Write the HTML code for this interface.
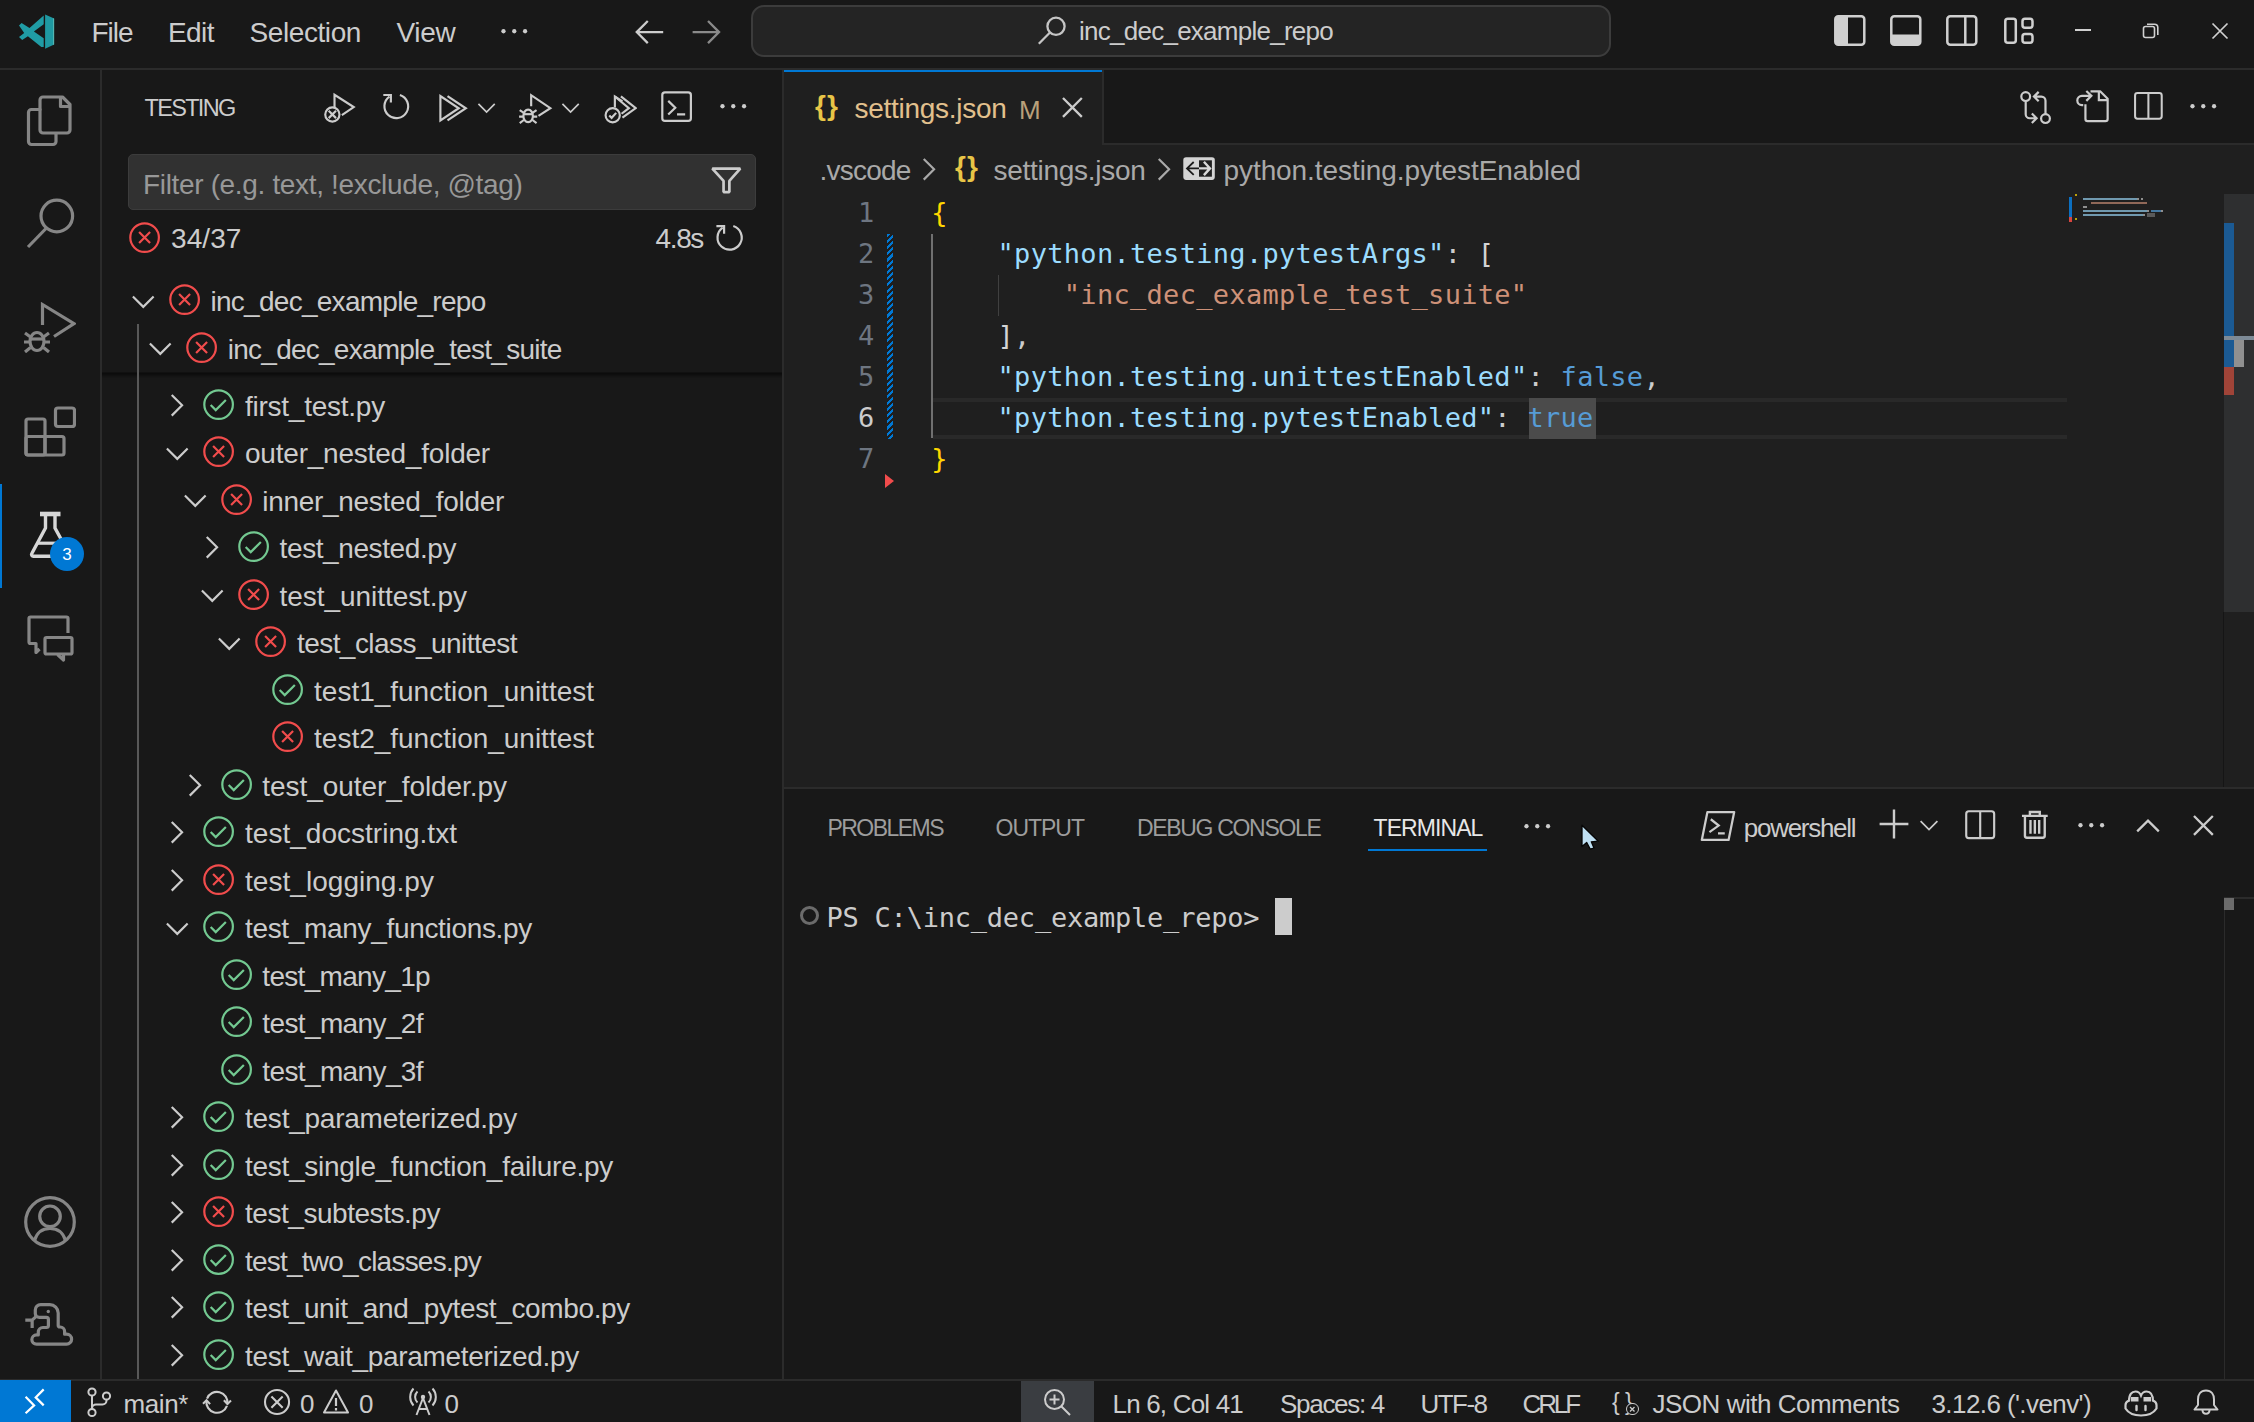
<!DOCTYPE html>
<html lang="en"><head><meta charset="utf-8"><title>settings.json - inc_dec_example_repo - Visual Studio Code</title>
<style>
html,body{margin:0;padding:0;background:#181818;}
body{width:2254px;height:1422px;position:relative;overflow:hidden;font-family:'Liberation Sans',sans-serif;color:#cccccc;}
#app{position:absolute;left:0;top:0;width:2254px;height:1422px;overflow:hidden;background:#181818;}
#app div,#app span,#app svg{position:absolute;display:block;}
#app span{white-space:pre;line-height:1;}
#app span b{font-weight:400;}
</style></head><body><div id="app">
<div style="left:0px;top:0px;width:2254px;height:68px;background:#181818;"></div>
<div style="left:0px;top:68px;width:2254px;height:2px;background:#2b2b2b;"></div>
<svg style="left:18px;top:14px;" width="38" height="36" viewBox="0 0 38 36" fill="none"><path d="M25.7 1.600 11.500 13.900 3.600 9 1 11.400 6.200 19.100 1 23.100 4.200 25.900 9.900 22.300 23.300 33.100H25.700V24.300L15.900 17.500 25.700 10.200z" fill="#209ca5"/><path d="M27.100 0.400 36.100 4.600V30.500L27.100 34.700z" fill="#1f99a2"/><path d="M35.300 4.300 36.100 4.600V30.500L35.300 30.900z" fill="#6cc0b8"/></svg>
<span style="left:91.5px;top:18.70px;font-size:28px;color:#cccccc;letter-spacing:-1.031px;">File</span>
<span style="left:168px;top:18.70px;font-size:28px;color:#cccccc;letter-spacing:-0.562px;">Edit</span>
<span style="left:249.5px;top:18.70px;font-size:28px;color:#cccccc;letter-spacing:-0.410px;">Selection</span>
<span style="left:396.5px;top:18.70px;font-size:28px;color:#cccccc;letter-spacing:-0.297px;">View</span>
<svg style="left:496.73px;top:13.93px;" width="34.54" height="34.54" viewBox="0 0 16 16" fill="none"><circle cx="3" cy="8" r="1" fill="#cccccc"/><circle cx="8" cy="8" r="1" fill="#cccccc"/><circle cx="13" cy="8" r="1" fill="#cccccc"/></svg>
<svg style="left:631.1px;top:13.1px;" width="36.8" height="36.8" viewBox="0 0 16 16" fill="none"><path d="M14 8.3H2.8M7.3 3.5 2.5 8.3 7.3 13.1" stroke="#cccccc" stroke-width="1" stroke-linecap="butt" stroke-linejoin="miter" fill="none"/></svg>
<svg style="left:688.1px;top:13.1px;" width="36.8" height="36.8" viewBox="0 0 16 16" fill="none"><path d="M2 8.3H13.2M8.7 3.5 13.5 8.3 8.7 13.1" stroke="#8a8a8a" stroke-width="1" stroke-linecap="butt" stroke-linejoin="miter" fill="none"/></svg>
<div style="left:751px;top:5px;width:860px;height:52px;background:#242424;border:2px solid #3c3c3c;box-sizing:border-box;border-radius:13px;"></div>
<svg style="left:1036px;top:15px;" width="32" height="32" viewBox="0 0 32 32" fill="none"><circle cx="20" cy="11.300" r="8.600" stroke="#c5c5c5" stroke-width="2.3" stroke-linecap="butt" stroke-linejoin="miter" fill="none"/><path d="M14 17.500 2.800 28.700" stroke="#c5c5c5" stroke-width="2.3" stroke-linecap="butt" stroke-linejoin="miter" fill="none"/></svg>
<span style="left:1079px;top:18.49px;font-size:26px;color:#cccccc;letter-spacing:-0.743px;">inc_dec_example_repo</span>
<svg style="left:1834px;top:14px;" width="32" height="33" viewBox="0 0 32 33" fill="none"><rect x="1.300" y="2.300" width="29" height="28.500" rx="3" stroke="#d0d0d0" stroke-width="2.5" stroke-linecap="butt" stroke-linejoin="miter" fill="none"/><path d="M4 2.300h10v28.500H4a2.700 2.700 0 0 1-2.700-2.700V5A2.700 2.700 0 0 1 4 2.300z" fill="#d0d0d0"/></svg>
<svg style="left:1890px;top:14px;" width="32" height="33" viewBox="0 0 32 33" fill="none"><rect x="1.300" y="2.300" width="29" height="28.500" rx="3" stroke="#d0d0d0" stroke-width="2.5" stroke-linecap="butt" stroke-linejoin="miter" fill="none"/><path d="M1.300 20.500h29V28a2.800 2.800 0 0 1-2.800 2.800H4A2.700 2.700 0 0 1 1.300 28z" fill="#d0d0d0"/></svg>
<svg style="left:1946px;top:14px;" width="32" height="33" viewBox="0 0 32 33" fill="none"><rect x="1.300" y="2.300" width="29" height="28.500" rx="3" stroke="#d0d0d0" stroke-width="2.5" stroke-linecap="butt" stroke-linejoin="miter" fill="none"/><path d="M19.300 3v27" stroke="#d0d0d0" stroke-width="2.5" stroke-linecap="butt" stroke-linejoin="miter" fill="none"/></svg>
<svg style="left:2003px;top:14px;" width="32" height="33" viewBox="0 0 32 33" fill="none"><rect x="2.300" y="4.800" width="10.500" height="24" rx="2.500" stroke="#d0d0d0" stroke-width="2.5" stroke-linecap="butt" stroke-linejoin="miter" fill="none"/><rect x="19.500" y="4.800" width="10" height="9" rx="2.500" stroke="#d0d0d0" stroke-width="2.5" stroke-linecap="butt" stroke-linejoin="miter" fill="none"/><rect x="19.500" y="20" width="10" height="8.800" rx="2.500" stroke="#d0d0d0" stroke-width="2.5" stroke-linecap="butt" stroke-linejoin="miter" fill="none"/></svg>
<div style="left:2075px;top:29px;width:15.5px;height:2px;background:#d0d0d0;"></div>
<svg style="left:2142px;top:22px;" width="18" height="18" viewBox="0 0 18 18" fill="none"><rect x="1.5" y="4.5" width="11" height="11" rx="2" stroke="#d0d0d0" stroke-width="1.6" stroke-linecap="butt" stroke-linejoin="miter" fill="none"/><path d="M5 2.2h7.5a3.3 3.3 0 0 1 3.3 3.3V13" stroke="#d0d0d0" stroke-width="1.6" stroke-linecap="butt" stroke-linejoin="miter" fill="none"/></svg>
<svg style="left:2211px;top:22px;" width="18" height="18" viewBox="0 0 18 18" fill="none"><path d="M1.5 1.5 16.5 16.5M16.5 1.5 1.5 16.5" stroke="#d0d0d0" stroke-width="1.7" stroke-linecap="butt" stroke-linejoin="miter" fill="none"/></svg>
<div style="left:100px;top:70px;width:2px;height:1310px;background:#2b2b2b;"></div>
<svg style="left:24px;top:95px;" width="52" height="52" viewBox="0 0 52 52" fill="none"><path d="M16 14.5H7.5a3 3 0 0 0-3 3V46.5a3 3 0 0 0 3 3H29a3 3 0 0 0 3-3V39" stroke="#868686" stroke-width="3.2" stroke-linecap="round" stroke-linejoin="round" fill="none"/><path d="M19 2H38.5L46 9.5V35a3 3 0 0 1-3 3H19a3 3 0 0 1-3-3V5a3 3 0 0 1 3-3z" stroke="#868686" stroke-width="3.2" stroke-linecap="round" stroke-linejoin="round" fill="none"/><path d="M36.5 2.5V11.5H45.5" stroke="#868686" stroke-width="3.2" stroke-linecap="round" stroke-linejoin="round" fill="none"/></svg>
<svg style="left:24px;top:197px;" width="52" height="52" viewBox="0 0 52 52" fill="none"><circle cx="32.8" cy="19" r="15.8" stroke="#868686" stroke-width="3.2" stroke-linecap="round" stroke-linejoin="round" fill="none"/><path d="M22 31.5 4 50" stroke="#868686" stroke-width="3.2" stroke-linecap="butt" stroke-linejoin="miter" fill="none"/></svg>
<svg style="left:24px;top:301px;" width="52" height="52" viewBox="0 0 52 52" fill="none"><path d="M18.5 24V3.5L50 22.7 30 35.5" stroke="#868686" stroke-width="3.2" stroke-linecap="butt" stroke-linejoin="miter" fill="none"/><ellipse cx="13" cy="40.5" rx="7" ry="9" stroke="#868686" stroke-width="3.2" stroke-linecap="butt" stroke-linejoin="miter" fill="none"/><path d="M6 38H20" stroke="#868686" stroke-width="3.2" stroke-linecap="butt" stroke-linejoin="miter" fill="none"/><path d="M1 32 6.5 36M25 32 19.5 36M0 41H6M20 41H26M1 51 6.5 46.5M25 51 19.5 46.5" stroke="#868686" stroke-width="3.2" stroke-linecap="butt" stroke-linejoin="miter" fill="none"/></svg>
<svg style="left:24px;top:405px;" width="52" height="52" viewBox="0 0 52 52" fill="none"><rect x="2" y="14" width="19" height="36" rx="2" stroke="#868686" stroke-width="3.2" stroke-linecap="round" stroke-linejoin="round" fill="none"/><rect x="2" y="31.5" width="38" height="18.5" rx="2" stroke="#868686" stroke-width="3.2" stroke-linecap="round" stroke-linejoin="round" fill="none"/><path d="M21 31.5V50" stroke="#868686" stroke-width="3.2" stroke-linecap="butt" stroke-linejoin="miter" fill="none"/><rect x="31.5" y="3" width="19" height="18.5" rx="2.5" stroke="#868686" stroke-width="3.2" stroke-linecap="round" stroke-linejoin="round" fill="none"/></svg>
<div style="left:0px;top:484px;width:2px;height:104px;background:#0078d4;"></div>
<svg style="left:24px;top:509px;" width="52" height="52" viewBox="0 0 52 52" fill="none"><path d="M16 5H36.5" stroke="#d7d7d7" stroke-width="4.6" stroke-linecap="butt" stroke-linejoin="miter" fill="none"/><path d="M21.5 6V19L7.8 44.5a1.8 1.8 0 0 0 1.6 2.7H42" stroke="#d7d7d7" stroke-width="3.4" stroke-linecap="butt" stroke-linejoin="round" fill="none"/><path d="M31 6V19L37 30" stroke="#d7d7d7" stroke-width="3.4" stroke-linecap="butt" stroke-linejoin="miter" fill="none"/><path d="M13.5 34.2H32" stroke="#d7d7d7" stroke-width="3.2" stroke-linecap="butt" stroke-linejoin="miter" fill="none"/></svg>
<div style="left:50px;top:536.5px;width:34px;height:34px;border-radius:17px;background:#0078d4"></div>
<span style="left:62.3px;top:545.81px;font-size:17px;color:#ffffff;">3</span>
<svg style="left:24px;top:612px;" width="52" height="52" viewBox="0 0 52 52" fill="none"><path d="M44 21V6.5a1.5 1.5 0 0 0-1.5-1.5H6.5A1.5 1.5 0 0 0 5 6.5V30A1.5 1.5 0 0 0 6.5 31.5H12V40.5L15.5 37" stroke="#868686" stroke-width="3.2" stroke-linecap="butt" stroke-linejoin="round" fill="none"/><rect x="21" y="25.5" width="27" height="16.5" rx="1.5" stroke="#868686" stroke-width="3.2" stroke-linecap="butt" stroke-linejoin="miter" fill="none"/><path d="M33.5 42.5 39.5 48 39.5 42.5" stroke="#868686" stroke-width="3.2" stroke-linecap="butt" stroke-linejoin="round" fill="none"/></svg>
<svg style="left:24px;top:1196px;" width="52" height="52" viewBox="0 0 52 52" fill="none"><circle cx="26" cy="26" r="24.3" stroke="#868686" stroke-width="3.2" stroke-linecap="round" stroke-linejoin="round" fill="none"/><circle cx="26" cy="20.3" r="10.3" stroke="#868686" stroke-width="3.2" stroke-linecap="round" stroke-linejoin="round" fill="none"/><path d="M10.500 44.500C13 36 19 32.500 26 32.500S39 36 41.500 44.500" stroke="#868686" stroke-width="3.2" stroke-linecap="butt" stroke-linejoin="miter" fill="none"/></svg>
<svg style="left:24px;top:1298px;" width="52" height="52" viewBox="0 0 52 52" fill="none"><path d="M15.3 19.4H22.4A2 2 0 0 1 24.4 21.4V27.5A2 2 0 0 1 22.4 29.5H18.9A4.6 4.6 0 0 0 14.3 34.1V36.9H12.5A4.65 4.65 0 0 0 12.5 46.2H42.6A5 5 0 0 0 42.6 36.2H40.6V33.4A4.4 4.4 0 0 0 36.2 29H35.6A1.4 1.4 0 0 1 34.2 27.6V15A8.4 8.4 0 0 0 25.8 6.6H16.7A5.4 5.4 0 0 0 11.3 12V15.4A4 4 0 0 0 15.3 19.4Z" stroke="#868686" stroke-width="3.2" stroke-linecap="round" stroke-linejoin="round" fill="none"/><path d="M12.5 18.1 8.15 22.2M1.3 22.2H8.15V30" stroke="#868686" stroke-width="3.2" stroke-linecap="butt" stroke-linejoin="miter" fill="none"/><circle cx="24.3" cy="13.5" r="1.7" fill="#868686"/></svg>
<div style="left:782px;top:70px;width:2px;height:1310px;background:#2b2b2b;"></div>
<span style="left:144.5px;top:97.31px;font-size:23.5px;color:#cccccc;letter-spacing:-1.692px;">TESTING</span>
<svg style="left:322.03px;top:89.23px;" width="34.54" height="34.54" viewBox="0 0 16 16" fill="none"><path d="M5.800 8.300V2.700L14.700 8.400 9.200 12.100" stroke="#cccccc" stroke-width="1" stroke-linecap="butt" stroke-linejoin="miter" fill="none"/><circle cx="4.800" cy="11.800" r="3.300" stroke="#cccccc" stroke-width="1" stroke-linecap="butt" stroke-linejoin="miter" fill="none"/><path d="M3.100 10.100 6.500 13.500M6.500 10.100 3.100 13.500" stroke="#cccccc" stroke-width="1" stroke-linecap="butt" stroke-linejoin="miter" fill="none"/></svg>
<svg style="left:378.73px;top:89.23px;" width="34.54" height="34.54" viewBox="0 0 16 16" fill="none"><path d="M2 2.800H5.500V6.300" stroke="#cccccc" stroke-width="1" stroke-linecap="butt" stroke-linejoin="miter" fill="none"/><path d="M4.85 3.5A5.5 5.5 0 1 0 9.68 2.76" stroke="#cccccc" stroke-width="1" stroke-linecap="butt" stroke-linejoin="miter" fill="none"/></svg>
<svg style="left:434.93px;top:89.53px;" width="34.54" height="34.54" viewBox="0 0 16 16" fill="none"><path d="M2.500 2.800V14.100L11 8.450z" stroke="#cccccc" stroke-width="1" stroke-linecap="butt" stroke-linejoin="miter" fill="none"/><path d="M5.800 2.800 14.300 8.450 5.800 14.100" stroke="#cccccc" stroke-width="1" stroke-linecap="butt" stroke-linejoin="miter" fill="none"/></svg>
<svg style="left:472.9px;top:93.8px;" width="27.2" height="27.2" viewBox="0 0 16 16" fill="none"><path d="M3.2 5.8 8 10.6 12.8 5.8" stroke="#cccccc" stroke-width="1" stroke-linecap="butt" stroke-linejoin="miter" fill="none"/></svg>
<svg style="left:518.23px;top:89.73px;" width="34.54" height="34.54" viewBox="0 0 16 16" fill="none"><path d="M6.100 7.500V2.400L15 8.400 9.500 12" stroke="#cccccc" stroke-width="1" stroke-linecap="butt" stroke-linejoin="miter" fill="none"/><ellipse cx="4.700" cy="12" rx="2.200" ry="2.900" stroke="#cccccc" stroke-width="1" stroke-linecap="butt" stroke-linejoin="miter" fill="none"/><path d="M2.500 11.200H6.900" stroke="#cccccc" stroke-width="1" stroke-linecap="butt" stroke-linejoin="miter" fill="none"/><path d="M0.800 9.300 2.700 10.600M8.600 9.300 6.700 10.600M0.500 12.300H2.500M6.900 12.300H8.900M0.800 15.300 2.700 13.900M8.600 15.300 6.700 13.900" stroke="#cccccc" stroke-width="1" stroke-linecap="butt" stroke-linejoin="miter" fill="none"/></svg>
<svg style="left:557.4px;top:93.8px;" width="27.2" height="27.2" viewBox="0 0 16 16" fill="none"><path d="M3.2 5.8 8 10.6 12.8 5.8" stroke="#cccccc" stroke-width="1" stroke-linecap="butt" stroke-linejoin="miter" fill="none"/></svg>
<svg style="left:602.73px;top:89.73px;" width="34.54" height="34.54" viewBox="0 0 16 16" fill="none"><path d="M5.500 8V3L9 5.300" stroke="#cccccc" stroke-width="1" stroke-linecap="butt" stroke-linejoin="miter" fill="none"/><path d="M8.300 3 15.200 8.400 9 12.800" stroke="#cccccc" stroke-width="1" stroke-linecap="butt" stroke-linejoin="miter" fill="none"/><path d="M5.500 3 12 8.400 8.600 11" stroke="#cccccc" stroke-width="1" stroke-linecap="butt" stroke-linejoin="miter" fill="none"/><circle cx="4.500" cy="11.700" r="3.300" stroke="#cccccc" stroke-width="1" stroke-linecap="butt" stroke-linejoin="miter" fill="none"/><path d="M2.900 11.800 4 12.900 6.100 10.600" stroke="#cccccc" stroke-width="1" stroke-linecap="butt" stroke-linejoin="miter" fill="none"/></svg>
<svg style="left:659.2px;top:88.8px;" width="35.2" height="35.2" viewBox="0 0 16 16" fill="none"><rect x="1.500" y="1.500" width="13" height="13" rx="1.200" stroke="#cccccc" stroke-width="1" stroke-linecap="butt" stroke-linejoin="miter" fill="none"/><path d="M4.200 5.400 7.400 8.500 4.200 11.600M8.200 11.500H11.900" stroke="#cccccc" stroke-width="1" stroke-linecap="butt" stroke-linejoin="miter" fill="none"/></svg>
<svg style="left:715.73px;top:89.33px;" width="34.54" height="34.54" viewBox="0 0 16 16" fill="none"><circle cx="3" cy="8" r="1" fill="#cccccc"/><circle cx="8" cy="8" r="1" fill="#cccccc"/><circle cx="13" cy="8" r="1" fill="#cccccc"/></svg>
<div style="left:128px;top:154px;width:628px;height:56px;background:#313131;border:1.5px solid #3c3c3c;box-sizing:border-box;border-radius:5px;"></div>
<span style="left:143px;top:170.50px;font-size:28px;color:#989898;letter-spacing:-0.339px;">Filter (e.g. text, !exclude, @tag)</span>
<svg style="left:709px;top:163px;" width="34.5" height="34.5" viewBox="0 0 16 16" fill="none"><path d="M1.550 2.600H14.500L9.450 8.300V13.500H6.750V8.300z" stroke="#cccccc" stroke-width="1.25" stroke-linecap="butt" stroke-linejoin="bevel" fill="none"/></svg>
<svg style="left:127.4px;top:220.4px;" width="35.2" height="35.2" viewBox="0 0 16 16" fill="none"><circle cx="8" cy="8" r="6.5" stroke="#f14c4c" stroke-width="1" stroke-linecap="butt" stroke-linejoin="miter" fill="none"/><path d="M5.5 5.5 10.5 10.5M10.5 5.5 5.5 10.5" stroke="#f14c4c" stroke-width="1" stroke-linecap="butt" stroke-linejoin="miter" fill="none"/></svg>
<span style="left:171px;top:224.80px;font-size:28px;color:#cccccc;letter-spacing:0.084px;">34/37</span>
<span style="left:655.5px;top:224.80px;font-size:28px;color:#cccccc;letter-spacing:-1.359px;">4.8s</span>
<svg style="left:712.4px;top:219.8px;" width="35.2" height="35.2" viewBox="0 0 16 16" fill="none"><path d="M2 2.800H5.500V6.300" stroke="#cccccc" stroke-width="1" stroke-linecap="butt" stroke-linejoin="miter" fill="none"/><path d="M4.85 3.5A5.5 5.5 0 1 0 9.68 2.76" stroke="#cccccc" stroke-width="1" stroke-linecap="butt" stroke-linejoin="miter" fill="none"/></svg>
<svg style="left:125.73px;top:283.73px;" width="34.54" height="34.54" viewBox="0 0 16 16" fill="none"><path d="M3.2 5.8 8 10.6 12.8 5.8" stroke="#cccccc" stroke-width="1" stroke-linecap="butt" stroke-linejoin="miter" fill="none"/></svg>
<svg style="left:166.7px;top:282.4px;" width="35.2" height="35.2" viewBox="0 0 16 16" fill="none"><circle cx="8" cy="8" r="6.5" stroke="#f14c4c" stroke-width="1" stroke-linecap="butt" stroke-linejoin="miter" fill="none"/><path d="M5.5 5.5 10.5 10.5M10.5 5.5 5.5 10.5" stroke="#f14c4c" stroke-width="1" stroke-linecap="butt" stroke-linejoin="miter" fill="none"/></svg>
<span style="left:210.5px;top:288.00px;font-size:28px;color:#cccccc;letter-spacing:-0.727px;">inc_dec_example_repo</span>
<svg style="left:143.0px;top:331.23px;" width="34.54" height="34.54" viewBox="0 0 16 16" fill="none"><path d="M3.2 5.8 8 10.6 12.8 5.8" stroke="#cccccc" stroke-width="1" stroke-linecap="butt" stroke-linejoin="miter" fill="none"/></svg>
<svg style="left:183.97px;top:329.9px;" width="35.2" height="35.2" viewBox="0 0 16 16" fill="none"><circle cx="8" cy="8" r="6.5" stroke="#f14c4c" stroke-width="1" stroke-linecap="butt" stroke-linejoin="miter" fill="none"/><path d="M5.5 5.5 10.5 10.5M10.5 5.5 5.5 10.5" stroke="#f14c4c" stroke-width="1" stroke-linecap="butt" stroke-linejoin="miter" fill="none"/></svg>
<span style="left:227.8px;top:335.50px;font-size:28px;color:#cccccc;letter-spacing:-0.754px;">inc_dec_example_test_suite</span>
<div style="left:102px;top:372px;width:680px;height:1px;background:#111111;"></div>
<div style="left:102px;top:373px;width:680px;height:1px;background:#0c0c0c;"></div>
<div style="left:102px;top:374px;width:680px;height:1px;background:#0e0e0e;"></div>
<div style="left:102px;top:375px;width:680px;height:1px;background:#111111;"></div>
<div style="left:102px;top:376px;width:680px;height:1px;background:#141414;"></div>
<div style="left:102px;top:377px;width:680px;height:1px;background:#161616;"></div>
<div style="left:137px;top:324px;width:1.5px;height:1056px;background:#585858;"></div>
<svg style="left:159.47px;top:387.73px;" width="34.54" height="34.54" viewBox="0 0 16 16" fill="none"><path d="M5.9 3.2 10.7 8 5.9 12.8" stroke="#cccccc" stroke-width="1" stroke-linecap="butt" stroke-linejoin="miter" fill="none"/></svg>
<svg style="left:201.24px;top:386.9px;" width="35.2" height="35.2" viewBox="0 0 16 16" fill="none"><circle cx="8" cy="8" r="6.5" stroke="#73c991" stroke-width="1" stroke-linecap="butt" stroke-linejoin="miter" fill="none"/><path d="M4.4 8.2 6.7 10.5 11.3 5.9" stroke="#73c991" stroke-width="1" stroke-linecap="butt" stroke-linejoin="miter" fill="none"/></svg>
<span style="left:245.0px;top:392.50px;font-size:28px;color:#cccccc;letter-spacing:-0.247px;">first_test.py</span>
<svg style="left:160.27px;top:435.73px;" width="34.54" height="34.54" viewBox="0 0 16 16" fill="none"><path d="M3.2 5.8 8 10.6 12.8 5.8" stroke="#cccccc" stroke-width="1" stroke-linecap="butt" stroke-linejoin="miter" fill="none"/></svg>
<svg style="left:201.24px;top:434.4px;" width="35.2" height="35.2" viewBox="0 0 16 16" fill="none"><circle cx="8" cy="8" r="6.5" stroke="#f14c4c" stroke-width="1" stroke-linecap="butt" stroke-linejoin="miter" fill="none"/><path d="M5.5 5.5 10.5 10.5M10.5 5.5 5.5 10.5" stroke="#f14c4c" stroke-width="1" stroke-linecap="butt" stroke-linejoin="miter" fill="none"/></svg>
<span style="left:245.0px;top:440.00px;font-size:28px;color:#cccccc;letter-spacing:-0.217px;">outer_nested_folder</span>
<svg style="left:177.54px;top:483.23px;" width="34.54" height="34.54" viewBox="0 0 16 16" fill="none"><path d="M3.2 5.8 8 10.6 12.8 5.8" stroke="#cccccc" stroke-width="1" stroke-linecap="butt" stroke-linejoin="miter" fill="none"/></svg>
<svg style="left:218.51px;top:481.9px;" width="35.2" height="35.2" viewBox="0 0 16 16" fill="none"><circle cx="8" cy="8" r="6.5" stroke="#f14c4c" stroke-width="1" stroke-linecap="butt" stroke-linejoin="miter" fill="none"/><path d="M5.5 5.5 10.5 10.5M10.5 5.5 5.5 10.5" stroke="#f14c4c" stroke-width="1" stroke-linecap="butt" stroke-linejoin="miter" fill="none"/></svg>
<span style="left:262.3px;top:487.50px;font-size:28px;color:#cccccc;letter-spacing:-0.307px;">inner_nested_folder</span>
<svg style="left:194.01px;top:530.23px;" width="34.54" height="34.54" viewBox="0 0 16 16" fill="none"><path d="M5.9 3.2 10.7 8 5.9 12.8" stroke="#cccccc" stroke-width="1" stroke-linecap="butt" stroke-linejoin="miter" fill="none"/></svg>
<svg style="left:235.78px;top:529.4px;" width="35.2" height="35.2" viewBox="0 0 16 16" fill="none"><circle cx="8" cy="8" r="6.5" stroke="#73c991" stroke-width="1" stroke-linecap="butt" stroke-linejoin="miter" fill="none"/><path d="M4.4 8.2 6.7 10.5 11.3 5.9" stroke="#73c991" stroke-width="1" stroke-linecap="butt" stroke-linejoin="miter" fill="none"/></svg>
<span style="left:279.6px;top:535.00px;font-size:28px;color:#cccccc;letter-spacing:-0.407px;">test_nested.py</span>
<svg style="left:194.81px;top:578.23px;" width="34.54" height="34.54" viewBox="0 0 16 16" fill="none"><path d="M3.2 5.8 8 10.6 12.8 5.8" stroke="#cccccc" stroke-width="1" stroke-linecap="butt" stroke-linejoin="miter" fill="none"/></svg>
<svg style="left:235.78px;top:576.9px;" width="35.2" height="35.2" viewBox="0 0 16 16" fill="none"><circle cx="8" cy="8" r="6.5" stroke="#f14c4c" stroke-width="1" stroke-linecap="butt" stroke-linejoin="miter" fill="none"/><path d="M5.5 5.5 10.5 10.5M10.5 5.5 5.5 10.5" stroke="#f14c4c" stroke-width="1" stroke-linecap="butt" stroke-linejoin="miter" fill="none"/></svg>
<span style="left:279.6px;top:582.50px;font-size:28px;color:#cccccc;letter-spacing:-0.058px;">test_unittest.py</span>
<svg style="left:212.08px;top:625.73px;" width="34.54" height="34.54" viewBox="0 0 16 16" fill="none"><path d="M3.2 5.8 8 10.6 12.8 5.8" stroke="#cccccc" stroke-width="1" stroke-linecap="butt" stroke-linejoin="miter" fill="none"/></svg>
<svg style="left:253.05px;top:624.4px;" width="35.2" height="35.2" viewBox="0 0 16 16" fill="none"><circle cx="8" cy="8" r="6.5" stroke="#f14c4c" stroke-width="1" stroke-linecap="butt" stroke-linejoin="miter" fill="none"/><path d="M5.5 5.5 10.5 10.5M10.5 5.5 5.5 10.5" stroke="#f14c4c" stroke-width="1" stroke-linecap="butt" stroke-linejoin="miter" fill="none"/></svg>
<span style="left:296.9px;top:630.00px;font-size:28px;color:#cccccc;letter-spacing:-0.537px;">test_class_unittest</span>
<svg style="left:270.32px;top:671.9px;" width="35.2" height="35.2" viewBox="0 0 16 16" fill="none"><circle cx="8" cy="8" r="6.5" stroke="#73c991" stroke-width="1" stroke-linecap="butt" stroke-linejoin="miter" fill="none"/><path d="M4.4 8.2 6.7 10.5 11.3 5.9" stroke="#73c991" stroke-width="1" stroke-linecap="butt" stroke-linejoin="miter" fill="none"/></svg>
<span style="left:314.1px;top:677.50px;font-size:28px;color:#cccccc;letter-spacing:-0.014px;">test1_function_unittest</span>
<svg style="left:270.32px;top:719.4px;" width="35.2" height="35.2" viewBox="0 0 16 16" fill="none"><circle cx="8" cy="8" r="6.5" stroke="#f14c4c" stroke-width="1" stroke-linecap="butt" stroke-linejoin="miter" fill="none"/><path d="M5.5 5.5 10.5 10.5M10.5 5.5 5.5 10.5" stroke="#f14c4c" stroke-width="1" stroke-linecap="butt" stroke-linejoin="miter" fill="none"/></svg>
<span style="left:314.1px;top:725.00px;font-size:28px;color:#cccccc;letter-spacing:-0.014px;">test2_function_unittest</span>
<svg style="left:176.74px;top:767.73px;" width="34.54" height="34.54" viewBox="0 0 16 16" fill="none"><path d="M5.9 3.2 10.7 8 5.9 12.8" stroke="#cccccc" stroke-width="1" stroke-linecap="butt" stroke-linejoin="miter" fill="none"/></svg>
<svg style="left:218.51px;top:766.9px;" width="35.2" height="35.2" viewBox="0 0 16 16" fill="none"><circle cx="8" cy="8" r="6.5" stroke="#73c991" stroke-width="1" stroke-linecap="butt" stroke-linejoin="miter" fill="none"/><path d="M4.4 8.2 6.7 10.5 11.3 5.9" stroke="#73c991" stroke-width="1" stroke-linecap="butt" stroke-linejoin="miter" fill="none"/></svg>
<span style="left:262.3px;top:772.50px;font-size:28px;color:#cccccc;letter-spacing:-0.063px;">test_outer_folder.py</span>
<svg style="left:159.47px;top:815.23px;" width="34.54" height="34.54" viewBox="0 0 16 16" fill="none"><path d="M5.9 3.2 10.7 8 5.9 12.8" stroke="#cccccc" stroke-width="1" stroke-linecap="butt" stroke-linejoin="miter" fill="none"/></svg>
<svg style="left:201.24px;top:814.4px;" width="35.2" height="35.2" viewBox="0 0 16 16" fill="none"><circle cx="8" cy="8" r="6.5" stroke="#73c991" stroke-width="1" stroke-linecap="butt" stroke-linejoin="miter" fill="none"/><path d="M4.4 8.2 6.7 10.5 11.3 5.9" stroke="#73c991" stroke-width="1" stroke-linecap="butt" stroke-linejoin="miter" fill="none"/></svg>
<span style="left:245.0px;top:820.00px;font-size:28px;color:#cccccc;letter-spacing:0.017px;">test_docstring.txt</span>
<svg style="left:159.47px;top:862.73px;" width="34.54" height="34.54" viewBox="0 0 16 16" fill="none"><path d="M5.9 3.2 10.7 8 5.9 12.8" stroke="#cccccc" stroke-width="1" stroke-linecap="butt" stroke-linejoin="miter" fill="none"/></svg>
<svg style="left:201.24px;top:861.9px;" width="35.2" height="35.2" viewBox="0 0 16 16" fill="none"><circle cx="8" cy="8" r="6.5" stroke="#f14c4c" stroke-width="1" stroke-linecap="butt" stroke-linejoin="miter" fill="none"/><path d="M5.5 5.5 10.5 10.5M10.5 5.5 5.5 10.5" stroke="#f14c4c" stroke-width="1" stroke-linecap="butt" stroke-linejoin="miter" fill="none"/></svg>
<span style="left:245.0px;top:867.50px;font-size:28px;color:#cccccc;letter-spacing:0.040px;">test_logging.py</span>
<svg style="left:160.27px;top:910.73px;" width="34.54" height="34.54" viewBox="0 0 16 16" fill="none"><path d="M3.2 5.8 8 10.6 12.8 5.8" stroke="#cccccc" stroke-width="1" stroke-linecap="butt" stroke-linejoin="miter" fill="none"/></svg>
<svg style="left:201.24px;top:909.4px;" width="35.2" height="35.2" viewBox="0 0 16 16" fill="none"><circle cx="8" cy="8" r="6.5" stroke="#73c991" stroke-width="1" stroke-linecap="butt" stroke-linejoin="miter" fill="none"/><path d="M4.4 8.2 6.7 10.5 11.3 5.9" stroke="#73c991" stroke-width="1" stroke-linecap="butt" stroke-linejoin="miter" fill="none"/></svg>
<span style="left:245.0px;top:915.00px;font-size:28px;color:#cccccc;letter-spacing:-0.328px;">test_many_functions.py</span>
<svg style="left:218.51px;top:956.9px;" width="35.2" height="35.2" viewBox="0 0 16 16" fill="none"><circle cx="8" cy="8" r="6.5" stroke="#73c991" stroke-width="1" stroke-linecap="butt" stroke-linejoin="miter" fill="none"/><path d="M4.4 8.2 6.7 10.5 11.3 5.9" stroke="#73c991" stroke-width="1" stroke-linecap="butt" stroke-linejoin="miter" fill="none"/></svg>
<span style="left:262.3px;top:962.50px;font-size:28px;color:#cccccc;letter-spacing:-0.683px;">test_many_1p</span>
<svg style="left:218.51px;top:1004.4px;" width="35.2" height="35.2" viewBox="0 0 16 16" fill="none"><circle cx="8" cy="8" r="6.5" stroke="#73c991" stroke-width="1" stroke-linecap="butt" stroke-linejoin="miter" fill="none"/><path d="M4.4 8.2 6.7 10.5 11.3 5.9" stroke="#73c991" stroke-width="1" stroke-linecap="butt" stroke-linejoin="miter" fill="none"/></svg>
<span style="left:262.3px;top:1010.00px;font-size:28px;color:#cccccc;letter-spacing:-0.618px;">test_many_2f</span>
<svg style="left:218.51px;top:1051.9px;" width="35.2" height="35.2" viewBox="0 0 16 16" fill="none"><circle cx="8" cy="8" r="6.5" stroke="#73c991" stroke-width="1" stroke-linecap="butt" stroke-linejoin="miter" fill="none"/><path d="M4.4 8.2 6.7 10.5 11.3 5.9" stroke="#73c991" stroke-width="1" stroke-linecap="butt" stroke-linejoin="miter" fill="none"/></svg>
<span style="left:262.3px;top:1057.50px;font-size:28px;color:#cccccc;letter-spacing:-0.618px;">test_many_3f</span>
<svg style="left:159.47px;top:1100.23px;" width="34.54" height="34.54" viewBox="0 0 16 16" fill="none"><path d="M5.9 3.2 10.7 8 5.9 12.8" stroke="#cccccc" stroke-width="1" stroke-linecap="butt" stroke-linejoin="miter" fill="none"/></svg>
<svg style="left:201.24px;top:1099.4px;" width="35.2" height="35.2" viewBox="0 0 16 16" fill="none"><circle cx="8" cy="8" r="6.5" stroke="#73c991" stroke-width="1" stroke-linecap="butt" stroke-linejoin="miter" fill="none"/><path d="M4.4 8.2 6.7 10.5 11.3 5.9" stroke="#73c991" stroke-width="1" stroke-linecap="butt" stroke-linejoin="miter" fill="none"/></svg>
<span style="left:245.0px;top:1105.00px;font-size:28px;color:#cccccc;letter-spacing:-0.242px;">test_parameterized.py</span>
<svg style="left:159.47px;top:1147.73px;" width="34.54" height="34.54" viewBox="0 0 16 16" fill="none"><path d="M5.9 3.2 10.7 8 5.9 12.8" stroke="#cccccc" stroke-width="1" stroke-linecap="butt" stroke-linejoin="miter" fill="none"/></svg>
<svg style="left:201.24px;top:1146.9px;" width="35.2" height="35.2" viewBox="0 0 16 16" fill="none"><circle cx="8" cy="8" r="6.5" stroke="#73c991" stroke-width="1" stroke-linecap="butt" stroke-linejoin="miter" fill="none"/><path d="M4.4 8.2 6.7 10.5 11.3 5.9" stroke="#73c991" stroke-width="1" stroke-linecap="butt" stroke-linejoin="miter" fill="none"/></svg>
<span style="left:245.0px;top:1152.50px;font-size:28px;color:#cccccc;letter-spacing:-0.282px;">test_single_function_failure.py</span>
<svg style="left:159.47px;top:1195.23px;" width="34.54" height="34.54" viewBox="0 0 16 16" fill="none"><path d="M5.9 3.2 10.7 8 5.9 12.8" stroke="#cccccc" stroke-width="1" stroke-linecap="butt" stroke-linejoin="miter" fill="none"/></svg>
<svg style="left:201.24px;top:1194.4px;" width="35.2" height="35.2" viewBox="0 0 16 16" fill="none"><circle cx="8" cy="8" r="6.5" stroke="#f14c4c" stroke-width="1" stroke-linecap="butt" stroke-linejoin="miter" fill="none"/><path d="M5.5 5.5 10.5 10.5M10.5 5.5 5.5 10.5" stroke="#f14c4c" stroke-width="1" stroke-linecap="butt" stroke-linejoin="miter" fill="none"/></svg>
<span style="left:245.0px;top:1200.00px;font-size:28px;color:#cccccc;letter-spacing:-0.461px;">test_subtests.py</span>
<svg style="left:159.47px;top:1242.73px;" width="34.54" height="34.54" viewBox="0 0 16 16" fill="none"><path d="M5.9 3.2 10.7 8 5.9 12.8" stroke="#cccccc" stroke-width="1" stroke-linecap="butt" stroke-linejoin="miter" fill="none"/></svg>
<svg style="left:201.24px;top:1241.9px;" width="35.2" height="35.2" viewBox="0 0 16 16" fill="none"><circle cx="8" cy="8" r="6.5" stroke="#73c991" stroke-width="1" stroke-linecap="butt" stroke-linejoin="miter" fill="none"/><path d="M4.4 8.2 6.7 10.5 11.3 5.9" stroke="#73c991" stroke-width="1" stroke-linecap="butt" stroke-linejoin="miter" fill="none"/></svg>
<span style="left:245.0px;top:1247.50px;font-size:28px;color:#cccccc;letter-spacing:-0.769px;">test_two_classes.py</span>
<svg style="left:159.47px;top:1290.23px;" width="34.54" height="34.54" viewBox="0 0 16 16" fill="none"><path d="M5.9 3.2 10.7 8 5.9 12.8" stroke="#cccccc" stroke-width="1" stroke-linecap="butt" stroke-linejoin="miter" fill="none"/></svg>
<svg style="left:201.24px;top:1289.4px;" width="35.2" height="35.2" viewBox="0 0 16 16" fill="none"><circle cx="8" cy="8" r="6.5" stroke="#73c991" stroke-width="1" stroke-linecap="butt" stroke-linejoin="miter" fill="none"/><path d="M4.4 8.2 6.7 10.5 11.3 5.9" stroke="#73c991" stroke-width="1" stroke-linecap="butt" stroke-linejoin="miter" fill="none"/></svg>
<span style="left:245.0px;top:1295.00px;font-size:28px;color:#cccccc;letter-spacing:-0.360px;">test_unit_and_pytest_combo.py</span>
<svg style="left:159.47px;top:1337.73px;" width="34.54" height="34.54" viewBox="0 0 16 16" fill="none"><path d="M5.9 3.2 10.7 8 5.9 12.8" stroke="#cccccc" stroke-width="1" stroke-linecap="butt" stroke-linejoin="miter" fill="none"/></svg>
<svg style="left:201.24px;top:1336.9px;" width="35.2" height="35.2" viewBox="0 0 16 16" fill="none"><circle cx="8" cy="8" r="6.5" stroke="#73c991" stroke-width="1" stroke-linecap="butt" stroke-linejoin="miter" fill="none"/><path d="M4.4 8.2 6.7 10.5 11.3 5.9" stroke="#73c991" stroke-width="1" stroke-linecap="butt" stroke-linejoin="miter" fill="none"/></svg>
<span style="left:245.0px;top:1342.50px;font-size:28px;color:#cccccc;letter-spacing:-0.325px;">test_wait_parameterized.py</span>
<div style="left:784px;top:70px;width:1470px;height:717px;background:#1f1f1f;"></div>
<div style="left:784px;top:70px;width:1470px;height:73px;background:#181818;"></div>
<div style="left:1102px;top:143px;width:1152px;height:2px;background:#2b2b2b;"></div>
<div style="left:784px;top:70px;width:318px;height:75px;background:#1f1f1f;"></div>
<div style="left:784px;top:70px;width:318px;height:2px;background:#0078d4;"></div>
<div style="left:1102px;top:70px;width:2px;height:75px;background:#2b2b2b;"></div>
<span style="left:815px;top:91.50px;font-size:28px;color:#e8c547;letter-spacing:1.102px;font-weight:700;">{}</span>
<span style="left:854.5px;top:95.20px;font-size:28px;color:#e2c08d;letter-spacing:-0.280px;">settings.json</span>
<span style="left:1019px;top:96.89px;font-size:26px;color:#b9a07a;letter-spacing:-0.672px;">M</span>
<svg style="left:1053.6px;top:88.6px;" width="36.8" height="36.8" viewBox="0 0 16 16" fill="none"><path d="M3.9 3.9 12.1 12.1M12.1 3.9 3.9 12.1" stroke="#cccccc" stroke-width="1" stroke-linecap="butt" stroke-linejoin="miter" fill="none"/></svg>
<svg style="left:2017.9px;top:89.9px;" width="35.2" height="35.2" viewBox="0 0 16 16" fill="none"><circle cx="3.5" cy="3" r="2" stroke="#cccccc" stroke-width="1" stroke-linecap="butt" stroke-linejoin="miter" fill="none"/><circle cx="12.5" cy="13" r="2" stroke="#cccccc" stroke-width="1" stroke-linecap="butt" stroke-linejoin="miter" fill="none"/><path d="M3.5 5V11a1.85 1.85 0 0 0 1.85 1.85H8.2M6.3 10.700 8.450 12.850 6.300 15" stroke="#cccccc" stroke-width="1" stroke-linecap="butt" stroke-linejoin="miter" fill="none"/><path d="M12.5 11V4.850a1.850 1.850 0 0 0-1.850-1.850H7.500M9.400 0.850 7.250 3 9.400 5.150" stroke="#cccccc" stroke-width="1" stroke-linecap="butt" stroke-linejoin="miter" fill="none"/></svg>
<svg style="left:2073.9px;top:89.4px;" width="35.2" height="35.2" viewBox="0 0 16 16" fill="none"><path d="M7.500 1.100H12L15.300 4.400V13.600a1 1 0 0 1-1 1H6.200a1 1 0 0 1-1-1V6.900" stroke="#cccccc" stroke-width="1" stroke-linecap="butt" stroke-linejoin="round" fill="none"/><path d="M11.300 1.300V5.100H15.100" stroke="#cccccc" stroke-width="1" stroke-linecap="butt" stroke-linejoin="miter" fill="none"/><path d="M4.200 7.300H3.600A2.100 2.100 0 0 1 3.600 3.100H7.800M5.600 0.900 7.900 3.100 5.600 5.400" stroke="#cccccc" stroke-width="1" stroke-linecap="butt" stroke-linejoin="miter" fill="none"/></svg>
<svg style="left:2132.2px;top:88.9px;" width="32.8" height="32.8" viewBox="0 0 16 16" fill="none"><rect x="1.500" y="2" width="13" height="12.500" rx="1.200" stroke="#cccccc" stroke-width="1" stroke-linecap="butt" stroke-linejoin="miter" fill="none"/><path d="M8 2V14.500" stroke="#cccccc" stroke-width="1" stroke-linecap="butt" stroke-linejoin="miter" fill="none"/></svg>
<svg style="left:2186.03px;top:89.33px;" width="34.54" height="34.54" viewBox="0 0 16 16" fill="none"><circle cx="3" cy="8" r="1" fill="#cccccc"/><circle cx="8" cy="8" r="1" fill="#cccccc"/><circle cx="13" cy="8" r="1" fill="#cccccc"/></svg>
<span style="left:819.5px;top:156.80px;font-size:28px;color:#a9a9a9;letter-spacing:-0.786px;">.vscode</span>
<svg style="left:910.73px;top:152.23px;" width="34.54" height="34.54" viewBox="0 0 16 16" fill="none"><path d="M5.9 3.2 10.7 8 5.9 12.8" stroke="#a9a9a9" stroke-width="1" stroke-linecap="butt" stroke-linejoin="miter" fill="none"/></svg>
<span style="left:955px;top:153.00px;font-size:28px;color:#e8c547;letter-spacing:1.102px;font-weight:700;">{}</span>
<span style="left:993.5px;top:156.80px;font-size:28px;color:#a9a9a9;letter-spacing:-0.280px;">settings.json</span>
<svg style="left:1146.23px;top:152.23px;" width="34.54" height="34.54" viewBox="0 0 16 16" fill="none"><path d="M5.9 3.2 10.7 8 5.9 12.8" stroke="#a9a9a9" stroke-width="1" stroke-linecap="butt" stroke-linejoin="miter" fill="none"/></svg>
<svg style="left:1183px;top:157px;" width="32" height="23" viewBox="0 0 32 23" fill="none"><rect x="0.300" y="0.200" width="31.500" height="22.700" rx="2.800" fill="#d4d4d4"/><rect x="16" y="3.300" width="12.900" height="16.400" fill="#1f1f1f"/><path d="M16.500 11.400H4.200M10.700 5 4 11.400 10.700 17.800" stroke="#1a1a1a" stroke-width="1.8" stroke-linecap="butt" stroke-linejoin="miter" fill="none"/><path d="M16 11.400H26M20.900 4.800 27 11.400 20.900 18.100" stroke="#d8d8d8" stroke-width="2.4" stroke-linecap="butt" stroke-linejoin="miter" fill="none"/></svg>
<span style="left:1223.5px;top:156.80px;font-size:28px;color:#a9a9a9;letter-spacing:-0.075px;">python.testing.pytestEnabled</span>
<div style="left:933px;top:398px;width:1134px;height:4px;background:#292929;"></div>
<div style="left:933px;top:435px;width:1134px;height:4px;background:#292929;"></div>
<div style="left:1529px;top:398px;width:67px;height:41px;background:#4b4b4b;"></div>
<span style="left:858px;top:199.46px;font-size:27px;color:#6e7681;letter-spacing:0.294px;font-family:'DejaVu Sans Mono','Liberation Mono',monospace;">1</span>
<span style="left:858px;top:240.36px;font-size:27px;color:#6e7681;letter-spacing:0.294px;font-family:'DejaVu Sans Mono','Liberation Mono',monospace;">2</span>
<span style="left:858px;top:281.26px;font-size:27px;color:#6e7681;letter-spacing:0.294px;font-family:'DejaVu Sans Mono','Liberation Mono',monospace;">3</span>
<span style="left:858px;top:322.16px;font-size:27px;color:#6e7681;letter-spacing:0.294px;font-family:'DejaVu Sans Mono','Liberation Mono',monospace;">4</span>
<span style="left:858px;top:363.06px;font-size:27px;color:#6e7681;letter-spacing:0.294px;font-family:'DejaVu Sans Mono','Liberation Mono',monospace;">5</span>
<span style="left:858px;top:403.96px;font-size:27px;color:#cccccc;letter-spacing:0.294px;font-family:'DejaVu Sans Mono','Liberation Mono',monospace;">6</span>
<span style="left:858px;top:444.86px;font-size:27px;color:#6e7681;letter-spacing:0.294px;font-family:'DejaVu Sans Mono','Liberation Mono',monospace;">7</span>
<span style="left:931.3px;top:199.46px;font-size:27px;color:#cccccc;letter-spacing:0.294px;font-family:'DejaVu Sans Mono','Liberation Mono',monospace;"><b style="color:#ffd700">{</b></span>
<span style="left:997.54px;top:240.36px;font-size:27px;color:#cccccc;letter-spacing:0.304px;font-family:'DejaVu Sans Mono','Liberation Mono',monospace;"><b style="color:#9cdcfe">"python.testing.pytestArgs"</b>: <b style="color:#d4d4d4">[</b></span>
<span style="left:1063.78px;top:281.26px;font-size:27px;color:#cccccc;letter-spacing:0.304px;font-family:'DejaVu Sans Mono','Liberation Mono',monospace;"><b style="color:#ce9178">"inc_dec_example_test_suite"</b></span>
<span style="left:997.54px;top:322.16px;font-size:27px;color:#cccccc;letter-spacing:0.302px;font-family:'DejaVu Sans Mono','Liberation Mono',monospace;"><b style="color:#d4d4d4">]</b>,</span>
<span style="left:997.54px;top:363.06px;font-size:27px;color:#cccccc;letter-spacing:0.305px;font-family:'DejaVu Sans Mono','Liberation Mono',monospace;"><b style="color:#9cdcfe">"python.testing.unittestEnabled"</b>: <b style="color:#569cd6">false</b>,</span>
<span style="left:997.54px;top:403.96px;font-size:27px;color:#cccccc;letter-spacing:0.304px;font-family:'DejaVu Sans Mono','Liberation Mono',monospace;"><b style="color:#9cdcfe">"python.testing.pytestEnabled"</b>: <b style="color:#569cd6">true</b></span>
<span style="left:931.3px;top:444.86px;font-size:27px;color:#cccccc;letter-spacing:0.294px;font-family:'DejaVu Sans Mono','Liberation Mono',monospace;"><b style="color:#ffd700">}</b></span>
<div style="left:930.8px;top:234px;width:2px;height:204px;background:#707070;"></div>
<div style="left:997.5px;top:275px;width:1.5px;height:41px;background:#404040;"></div>
<div style="left:886.500px;top:234px;width:6px;height:205px;background:repeating-linear-gradient(135deg,#0078d4 0,#0078d4 2.200px,transparent 2.200px,transparent 4.400px)"></div>
<svg style="left:884px;top:473px;" width="12" height="16" viewBox="0 0 12 16" fill="none"><path d="M1 1 10 8 1 15z" fill="#f14c4c"/></svg>
<div style="left:2069px;top:196.5px;width:2.5px;height:20.5px;background:#0c6fc0;"></div>
<div style="left:2069px;top:217px;width:2.5px;height:4.5px;background:#d9453f;"></div>
<div style="left:2075.2px;top:193.6px;width:2px;height:2px;background:#ffd700;opacity:0.7;"></div>
<div style="left:2083.2px;top:197.6px;width:54px;height:2px;background:#9cdcfe;opacity:0.65;"></div>
<div style="left:2137.2px;top:197.6px;width:2px;height:2px;background:#cccccc;opacity:0.65;"></div>
<div style="left:2141.2px;top:197.6px;width:2px;height:2px;background:#cccccc;opacity:0.65;"></div>
<div style="left:2091.2px;top:201.6px;width:56px;height:2px;background:#ce9178;opacity:0.65;"></div>
<div style="left:2083.2px;top:205.6px;width:4px;height:2px;background:#cccccc;opacity:0.65;"></div>
<div style="left:2083.2px;top:209.6px;width:64px;height:2px;background:#9cdcfe;opacity:0.65;"></div>
<div style="left:2147.2px;top:209.6px;width:2px;height:2px;background:#cccccc;opacity:0.65;"></div>
<div style="left:2151.2px;top:209.6px;width:10px;height:2px;background:#569cd6;opacity:0.7;"></div>
<div style="left:2161.2px;top:209.6px;width:2px;height:2px;background:#cccccc;opacity:0.65;"></div>
<div style="left:2083.2px;top:213.6px;width:60px;height:2px;background:#9cdcfe;opacity:0.65;"></div>
<div style="left:2143.2px;top:213.6px;width:2px;height:2px;background:#cccccc;opacity:0.65;"></div>
<div style="left:2147.2px;top:212.6px;width:8px;height:4px;background:#5a5a5a;"></div>
<div style="left:2075.2px;top:217.6px;width:2px;height:2px;background:#ffd700;opacity:0.7;"></div>
<div style="left:2224px;top:194px;width:30px;height:418px;background:#2e2f30;"></div>
<div style="left:2223px;top:612px;width:1px;height:176px;background:#151515;"></div>
<div style="left:2224px;top:222.5px;width:9.5px;height:144px;background:#1b5a93;"></div>
<div style="left:2224px;top:366.5px;width:9.5px;height:28.5px;background:#a04438;"></div>
<div style="left:2224px;top:336px;width:30px;height:4px;background:#7d8a96;"></div>
<div style="left:2233.5px;top:340px;width:10.5px;height:26.5px;background:#909090;"></div>
<div style="left:784px;top:789px;width:1470px;height:591px;background:#181818;"></div>
<div style="left:784px;top:787px;width:1470px;height:2px;background:#2b2b2b;"></div>
<span style="left:827.5px;top:817.23px;font-size:23px;color:#9d9d9d;letter-spacing:-1.541px;">PROBLEMS</span>
<span style="left:995.5px;top:817.23px;font-size:23px;color:#9d9d9d;letter-spacing:-1.010px;">OUTPUT</span>
<span style="left:1137px;top:817.23px;font-size:23px;color:#9d9d9d;letter-spacing:-1.320px;">DEBUG CONSOLE</span>
<span style="left:1373.5px;top:817.23px;font-size:23px;color:#e7e7e7;letter-spacing:-0.912px;">TERMINAL</span>
<div style="left:1367.5px;top:848.5px;width:119.5px;height:2.5px;background:#0078d4;"></div>
<svg style="left:1520.23px;top:808.53px;" width="34.54" height="34.54" viewBox="0 0 16 16" fill="none"><circle cx="3" cy="8" r="1" fill="#cccccc"/><circle cx="8" cy="8" r="1" fill="#cccccc"/><circle cx="13" cy="8" r="1" fill="#cccccc"/></svg>
<svg style="left:1580px;top:824.1px;" width="21" height="28" viewBox="0 0 21 28" fill="none"><path d="M2 1.300V22.600L6.700 18.500 10.200 25.100 14 24 11.300 17.800 18.300 17.200z" fill="#bfe0f3" stroke="#050505" stroke-width="1.300" stroke-linejoin="round"/></svg>
<svg style="left:1699.5px;top:807.6px;" width="36.0" height="36.0" viewBox="0 0 16 16" fill="none"><path d="M3.300 1.800H15.200L12.700 14.200H0.800z" stroke="#cccccc" stroke-width="1" stroke-linecap="butt" stroke-linejoin="round" fill="none"/><path d="M4.800 5 8.300 7.800 4.200 10.700M8 11.300H11" stroke="#cccccc" stroke-width="1" stroke-linecap="butt" stroke-linejoin="miter" fill="none"/></svg>
<span style="left:1743.8px;top:814.89px;font-size:26px;color:#cccccc;letter-spacing:-1.280px;">powershell</span>
<svg style="left:1875.8px;top:806.3px;" width="38.4" height="38.4" viewBox="0 0 16 16" fill="none"><path d="M7.5 1.5V13.5M1.5 7.5H13.5" stroke="#cccccc" stroke-width="1" stroke-linecap="butt" stroke-linejoin="miter" fill="none"/></svg>
<svg style="left:1915.2px;top:811.0px;" width="28.0" height="28.0" viewBox="0 0 16 16" fill="none"><path d="M3.2 5.8 8 10.6 12.8 5.8" stroke="#cccccc" stroke-width="1" stroke-linecap="butt" stroke-linejoin="miter" fill="none"/></svg>
<svg style="left:1963.3px;top:807.3px;" width="34.4" height="34.4" viewBox="0 0 16 16" fill="none"><rect x="1.500" y="2" width="13" height="12.500" rx="1.200" stroke="#cccccc" stroke-width="1" stroke-linecap="butt" stroke-linejoin="miter" fill="none"/><path d="M8 2V14.500" stroke="#cccccc" stroke-width="1" stroke-linecap="butt" stroke-linejoin="miter" fill="none"/></svg>
<svg style="left:2018.66px;top:808.66px;" width="31.68" height="31.68" viewBox="0 0 16 16" fill="none"><path d="M1.500 3.500H14.500M5.500 3.300V1.500H10.500V3.300" stroke="#cccccc" stroke-width="1.2" stroke-linecap="butt" stroke-linejoin="miter" fill="none"/><path d="M3 3.500V13.500a1 1 0 0 0 1 1H12a1 1 0 0 0 1-1V3.500" stroke="#cccccc" stroke-width="1.2" stroke-linecap="butt" stroke-linejoin="miter" fill="none"/><path d="M5.800 5.500V12.500M8 5.500V12.500M10.200 5.500V12.500" stroke="#cccccc" stroke-width="1.2" stroke-linecap="butt" stroke-linejoin="miter" fill="none"/></svg>
<svg style="left:2074.23px;top:808.33px;" width="34.54" height="34.54" viewBox="0 0 16 16" fill="none"><circle cx="3" cy="8" r="1" fill="#cccccc"/><circle cx="8" cy="8" r="1" fill="#cccccc"/><circle cx="13" cy="8" r="1" fill="#cccccc"/></svg>
<svg style="left:2130.0px;top:807.5px;" width="36.0" height="36.0" viewBox="0 0 16 16" fill="none"><path d="M3.2 10.4 8 5.6 12.8 10.4" stroke="#cccccc" stroke-width="1" stroke-linecap="butt" stroke-linejoin="miter" fill="none"/></svg>
<svg style="left:2185.4px;top:806.8px;" width="36.8" height="36.8" viewBox="0 0 16 16" fill="none"><path d="M3.9 3.9 12.1 12.1M12.1 3.9 3.9 12.1" stroke="#cccccc" stroke-width="1" stroke-linecap="butt" stroke-linejoin="miter" fill="none"/></svg>
<div style="left:799.500px;top:905.500px;width:19px;height:19px;border-radius:50%;border:3.500px solid #6b6b6b;box-sizing:border-box"></div>
<span style="left:826.5px;top:904.06px;font-size:27px;color:#cccccc;letter-spacing:-0.226px;font-family:'DejaVu Sans Mono','Liberation Mono',monospace;">PS C:\inc_dec_example_repo&gt; </span>
<div style="left:1275px;top:898px;width:16.5px;height:37px;background:#cccccc;"></div>
<div style="left:2224px;top:897px;width:30px;height:1.5px;background:#2b2b2b;"></div>
<div style="left:2223.5px;top:897px;width:1px;height:483px;background:#2b2b2b;"></div>
<div style="left:2224px;top:897.5px;width:9.5px;height:12.5px;background:#6b6b6b;"></div>
<div style="left:0px;top:1381px;width:2254px;height:41px;background:#181818;"></div>
<div style="left:0px;top:1379px;width:2254px;height:2px;background:#2b2b2b;"></div>
<div style="left:0px;top:1380px;width:71px;height:42px;background:#0078d4;"></div>
<svg style="left:20px;top:1385px;" width="30" height="32" viewBox="0 0 30 32" fill="none"><path d="M5.6 11.8 14.1 20.4 5.6 28.300M23.700 4.400 15.700 12.400 23.700 20.400" stroke="#ffffff" stroke-width="2.2" stroke-linecap="butt" stroke-linejoin="miter" fill="none"/></svg>
<svg style="left:86px;top:1386px;" width="26" height="32" viewBox="0 0 26 32" fill="none"><circle cx="6" cy="6" r="3.600" stroke="#cccccc" stroke-width="2" stroke-linecap="butt" stroke-linejoin="miter" fill="none"/><circle cx="6" cy="26.500" r="3.600" stroke="#cccccc" stroke-width="2" stroke-linecap="butt" stroke-linejoin="miter" fill="none"/><circle cx="20.500" cy="10" r="3.600" stroke="#cccccc" stroke-width="2" stroke-linecap="butt" stroke-linejoin="miter" fill="none"/><path d="M6 9.600V23M20.500 13.600V14.500a4 4 0 0 1-4 4H10a4 4 0 0 0-4 4" stroke="#cccccc" stroke-width="2" stroke-linecap="butt" stroke-linejoin="miter" fill="none"/></svg>
<span style="left:123.5px;top:1390.69px;font-size:26px;color:#cccccc;letter-spacing:-0.397px;">main*</span>
<svg style="left:201px;top:1388px;" width="32" height="28" viewBox="0 0 32 28" fill="none"><path d="M6.040 10.600A10.600 10.600 0 0 1 26.400 16M25.960 17.800A10.600 10.600 0 0 1 5.560 12.360" stroke="#cccccc" stroke-width="2.1" stroke-linecap="butt" stroke-linejoin="miter" fill="none"/><path d="M22.900 12.300 26.400 16 30 12.600M2 15.800 5.560 12.360 9.100 16.100" stroke="#cccccc" stroke-width="2.1" stroke-linecap="butt" stroke-linejoin="miter" fill="none"/></svg>
<svg style="left:261.96px;top:1386.96px;" width="30.08" height="30.08" viewBox="0 0 16 16" fill="none"><circle cx="8" cy="8" r="6.400" stroke="#cccccc" stroke-width="1.1" stroke-linecap="butt" stroke-linejoin="miter" fill="none"/><path d="M5 5 11 11M11 5 5 11" stroke="#cccccc" stroke-width="1.1" stroke-linecap="butt" stroke-linejoin="miter" fill="none"/></svg>
<span style="left:300px;top:1390.69px;font-size:26px;color:#cccccc;letter-spacing:-0.969px;">0</span>
<svg style="left:322px;top:1388px;" width="28" height="27" viewBox="0 0 28 27" fill="none"><path d="M14 2.500 26 24.500H2z" stroke="#cccccc" stroke-width="2" stroke-linecap="butt" stroke-linejoin="round" fill="none"/><path d="M14 10V18M14 20V22.500" stroke="#cccccc" stroke-width="2.2" stroke-linecap="butt" stroke-linejoin="miter" fill="none"/></svg>
<span style="left:359px;top:1390.69px;font-size:26px;color:#cccccc;letter-spacing:-0.969px;">0</span>
<svg style="left:409px;top:1387px;" width="28" height="30" viewBox="0 0 28 30" fill="none"><path d="M14 11 7.500 28M14 11 20.500 28M9.800 22H18.200" stroke="#cccccc" stroke-width="2" stroke-linecap="butt" stroke-linejoin="miter" fill="none"/><circle cx="14" cy="10" r="2.200" fill="#cccccc"/><path d="M8.500 4.500A7.500 7.500 0 0 0 8.500 15.500M19.500 4.500A7.500 7.500 0 0 1 19.500 15.500M4.500 1.500A12.500 12.500 0 0 0 4.500 18.500M23.500 1.500A12.500 12.500 0 0 1 23.500 18.500" stroke="#cccccc" stroke-width="2" stroke-linecap="butt" stroke-linejoin="miter" fill="none"/></svg>
<span style="left:444.5px;top:1390.69px;font-size:26px;color:#cccccc;letter-spacing:-0.969px;">0</span>
<div style="left:1021px;top:1381px;width:73px;height:41px;background:#3a3d41;"></div>
<svg style="left:1042px;top:1388px;" width="30" height="29" viewBox="0 0 30 29" fill="none"><circle cx="12.500" cy="11.500" r="9.500" stroke="#cccccc" stroke-width="2" stroke-linecap="butt" stroke-linejoin="miter" fill="none"/><path d="M19.500 18.500 28 27M7.500 11.500H17.500M12.500 6.500V16.500" stroke="#cccccc" stroke-width="2" stroke-linecap="butt" stroke-linejoin="miter" fill="none"/></svg>
<span style="left:1112.5px;top:1391.19px;font-size:26px;color:#cccccc;letter-spacing:-0.810px;">Ln 6, Col 41</span>
<span style="left:1280px;top:1391.19px;font-size:26px;color:#cccccc;letter-spacing:-1.293px;">Spaces: 4</span>
<span style="left:1420.5px;top:1391.19px;font-size:26px;color:#cccccc;letter-spacing:-1.534px;">UTF-8</span>
<span style="left:1522.5px;top:1391.19px;font-size:26px;color:#cccccc;letter-spacing:-3.102px;">CRLF</span>
<span style="left:1612px;top:1390.73px;font-size:23px;color:#cccccc;letter-spacing:-0.589px;">{ }</span>
<div style="left:1626px;top:1402.500px;width:12.500px;height:12.500px;border-radius:50%;background:#181818;border:1.600px solid #cccccc;box-sizing:border-box"></div>
<svg style="left:1626px;top:1402.5px;" width="12.5" height="12.5" viewBox="0 0 12.500 12.500" fill="none"><path d="M4 4 8.500 8.500M8.500 4 4 8.500" stroke="#cccccc" stroke-width="1.3" stroke-linecap="butt" stroke-linejoin="miter" fill="none"/></svg>
<span style="left:1652.5px;top:1391.19px;font-size:26px;color:#cccccc;letter-spacing:-0.485px;">JSON with Comments</span>
<span style="left:1931.5px;top:1391.19px;font-size:26px;color:#cccccc;letter-spacing:-0.588px;">3.12.6 ('.venv')</span>
<svg style="left:2124px;top:1389px;" width="34" height="28" viewBox="0 0 34 28" fill="none"><path d="M5 12.500C5 5 8 2.500 11.500 2.500S16 4 17 6.500C18 4 19 2.500 22.500 2.500S29 5 29 12.500" stroke="#cccccc" stroke-width="2.2" stroke-linecap="butt" stroke-linejoin="miter" fill="none"/><path d="M5 11.500C2.500 12.500 1.500 14 1.500 16V19.500C4 23.500 10 26.500 17 26.500S30 23.500 32.500 19.500V16C32.500 14 31.500 12.500 29 11.500" stroke="#cccccc" stroke-width="2.2" stroke-linecap="round" stroke-linejoin="round" fill="none"/><path d="M7 8H14.500V12.500H7zM19.500 8H27V12.500H19.500z" fill="#cccccc"/><path d="M12.500 17V21M21.500 17V21" stroke="#cccccc" stroke-width="2.4" stroke-linecap="round" stroke-linejoin="miter" fill="none"/></svg>
<svg style="left:2192px;top:1388px;" width="28" height="28" viewBox="0 0 28 28" fill="none"><path d="M14 2.500C8.500 2.500 6 6.500 6 11.500V17L2.500 21.500H25.500L22 17V11.500C22 6.500 19.500 2.500 14 2.500z" stroke="#cccccc" stroke-width="2" stroke-linecap="butt" stroke-linejoin="round" fill="none"/><path d="M10.500 22C10.500 27 17.500 27 17.500 22" stroke="#cccccc" stroke-width="2" stroke-linecap="butt" stroke-linejoin="miter" fill="none"/></svg>
</div></body></html>
